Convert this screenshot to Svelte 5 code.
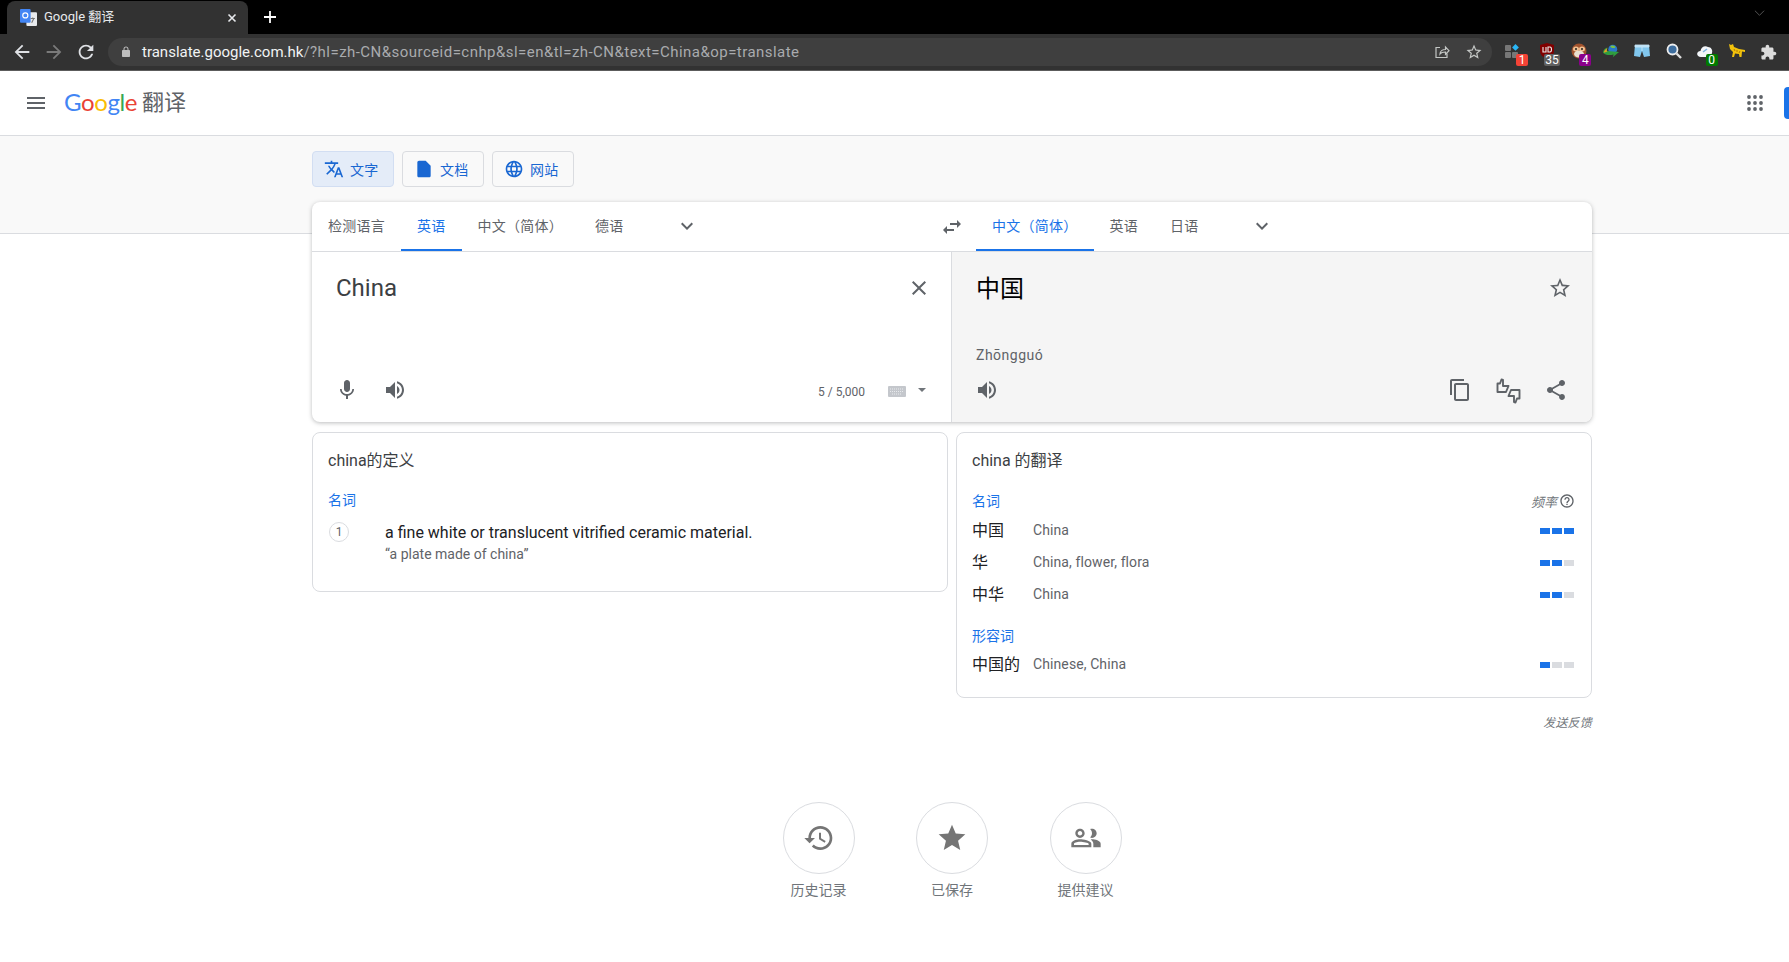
<script>
  const P = {
    menu: 'M3 18h18v-2H3v2zm0-5h18v-2H3v2zm0-7v2h18V6H3z',
    translate: 'M12.87 15.07l-2.54-2.51.03-.03c1.74-1.94 2.98-4.17 3.71-6.53H17V4h-7V2H8v2H1v1.99h11.17C11.5 7.92 10.44 9.75 9 11.35 8.07 10.32 7.3 9.19 6.69 8h-2c.73 1.63 1.73 3.17 2.98 4.56l-5.09 5.02L4 19l5-5 3.11 3.11.76-2.04zM18.5 10h-2L12 22h2l1.12-3h4.75L21 22h2l-4.5-12zm-2.62 7l1.62-4.33L19.12 17h-3.24z',
    doc: 'M14 2H6c-1.1 0-1.99.9-1.99 2L4 20c0 1.1.89 2 1.99 2H18c1.1 0 2-.9 2-2V8l-6-6z',
    globe: 'M11.99 2C6.47 2 2 6.48 2 12s4.47 10 9.99 10C17.52 22 22 17.52 22 12S17.52 2 11.99 2zm6.93 6h-2.95c-.32-1.25-.78-2.45-1.38-3.56 1.84.63 3.37 1.91 4.33 3.56zM12 4.04c.83 1.2 1.48 2.53 1.91 3.96h-3.82c.43-1.43 1.08-2.76 1.91-3.96zM4.26 14C4.1 13.36 4 12.69 4 12s.1-1.36.26-2h3.38c-.08.66-.14 1.32-.14 2 0 .68.06 1.34.14 2H4.26zm.82 2h2.95c.32 1.25.78 2.45 1.38 3.56-1.84-.63-3.37-1.9-4.33-3.56zm2.95-8H5.08c.96-1.66 2.49-2.93 4.33-3.56C8.81 5.55 8.35 6.75 8.03 8zM12 19.96c-.83-1.2-1.48-2.53-1.91-3.96h3.82c-.43 1.43-1.08 2.76-1.91 3.96zM14.34 14H9.66c-.09-.66-.16-1.32-.16-2 0-.68.07-1.35.16-2h4.68c.09.65.16 1.32.16 2 0 .68-.07 1.34-.16 2zm.25 5.56c.6-1.11 1.06-2.31 1.38-3.56h2.95c-.96 1.65-2.49 2.93-4.33 3.56zM16.36 14c.08-.66.14-1.32.14-2 0-.68-.06-1.34-.14-2h3.38c.16.64.26 1.31.26 2s-.1 1.36-.26 2h-3.38z',
    swap: 'M6.99 11L3 15l3.99 4v-3H14v-2H6.99v-3zM21 9l-3.99-4v3H10v2h7.01v3L21 9z',
    more: 'M16.59 8.59L12 13.17 7.41 8.59 6 10l6 6 6-6z',
    close: 'M19 6.41L17.59 5 12 10.59 6.41 5 5 6.41 10.59 12 5 17.59 6.41 19 12 13.41 17.59 19 19 17.59 13.41 12z',
    mic: 'M12 14c1.66 0 2.99-1.34 2.99-3L15 5c0-1.66-1.34-3-3-3S9 3.34 9 5v6c0 1.66 1.34 3 3 3zm5.3-3c0 3-2.54 5.1-5.3 5.1S6.7 14 6.7 11H5c0 3.41 2.72 6.23 6 6.72V21h2v-3.28c3.28-.48 6-3.3 6-6.72h-1.7z',
    vol: 'M3 9v6h4l5 5V4L7 9H3zm13.5 3c0-1.77-1.02-3.29-2.5-4.03v8.05c1.48-.73 2.5-2.25 2.5-4.02zM14 3.23v2.06c2.89.86 5 3.54 5 6.71s-2.11 5.85-5 6.71v2.06c4.01-.91 7-4.49 7-8.77s-2.99-7.86-7-8.77z',
    starO: 'M22 9.24l-7.19-.62L12 2 9.19 8.63 2 9.24l5.46 4.73L5.82 21 12 17.27 18.18 21l-1.63-7.03L22 9.24zM12 15.4l-3.76 2.27 1-4.28-3.32-2.88 4.38-.38L12 6.1l1.71 4.04 4.38.38-3.32 2.88 1 4.28L12 15.4z',
    star: 'M12 17.27L18.18 21l-1.64-7.03L22 9.24l-7.19-.61L12 2 9.19 8.63 2 9.24l5.46 4.73L5.82 21z',
    copy: 'M16 1H4c-1.1 0-2 .9-2 2v14h2V3h12V1zm3 4H8c-1.1 0-2 .9-2 2v14c0 1.1.9 2 2 2h11c1.1 0 2-.9 2-2V7c0-1.1-.9-2-2-2zm0 16H8V7h11v14z',
    share: 'M18 16.08c-.76 0-1.44.3-1.96.77L8.91 12.7c.05-.23.09-.46.09-.7s-.04-.47-.09-.7l7.05-4.11c.54.5 1.25.81 2.04.81 1.66 0 3-1.34 3-3s-1.34-3-3-3-3 1.34-3 3c0 .24.04.47.09.7L8.04 9.81C7.5 9.31 6.79 9 6 9c-1.66 0-3 1.34-3 3s1.34 3 3 3c.79 0 1.5-.31 2.04-.81l7.12 4.16c-.05.21-.08.43-.08.65 0 1.61 1.31 2.92 2.92 2.92 1.61 0 2.92-1.31 2.92-2.92s-1.31-2.92-2.92-2.92z',
    history: 'M13 3c-4.97 0-9 4.03-9 9H1l3.89 3.89.07.14L9 12H6c0-3.87 3.13-7 7-7s7 3.13 7 7-3.13 7-7 7c-1.93 0-3.68-.79-4.94-2.06l-1.42 1.42C8.27 19.99 10.51 21 13 21c4.97 0 9-4.03 9-9s-4.03-9-9-9zm-1 5v5l4.28 2.54.72-1.21-3.5-2.08V8H12z',
    people: 'M16.5 13c-.3 0-.6.02-.95.05C16.7 13.9 17.5 15 17.5 16.25V19H23v-2.75c0-2.17-4.33-3.25-6.5-3.25zM7.5 13C5.33 13 1 14.08 1 16.25V19h15v-2.75C16 14.08 9.67 13 7.500 13zm6.500 4.200H3v-.95c0-.54 2.060-1.450 4.500-1.450s6.500.91 6.500 1.450v.95zM7.500 12C9.430 12 11 10.430 11 8.500S9.430 5 7.500 5 4 6.570 4 8.500 5.570 12 7.500 12zm0-5.200c.94 0 1.700.76 1.700 1.700s-.76 1.700-1.700 1.700-1.700-.76-1.700-1.700.76-1.700 1.700-1.700zm9 5.200c1.930 0 3.500-1.570 3.500-3.500S18.430 5 16.500 5c-.5 0-.98.1-1.400.3.88 1 1.400 2.020 1.400 3.200s-.52 2.200-1.400 3.200c.42.2.9.3 1.400.3z',
    help: 'M11 18h2v-2h-2v2zm1-16C6.48 2 2 6.48 2 12s4.48 10 10 10 10-4.48 10-10S17.52 2 12 2zm0 18c-4.41 0-8-3.59-8-8s3.59-8 8-8 8 3.59 8 8-3.59 8-8 8zm0-14c-2.21 0-4 1.79-4 4h2c0-1.1.9-2 2-2s2 .9 2 2c0 2-3 1.75-3 5h2c0-2.25 3-2.5 3-5 0-2.21-1.79-4-4-4z',
    back: 'M20 11H7.83l5.59-5.59L12 4l-8 8 8 8 1.41-1.41L7.83 13H20v-2z',
    forward: 'M4 11h12.17l-5.59-5.59L12 4l8 8-8 8-1.41-1.41L16.17 13H4v-2z',
    reload: 'M17.65 6.35C16.2 4.9 14.21 4 12 4c-4.42 0-7.99 3.58-7.99 8s3.57 8 7.99 8c3.73 0 6.84-2.55 7.73-6h-2.08c-.82 2.33-3.04 4-5.65 4-3.31 0-6-2.69-6-6s2.69-6 6-6c1.66 0 3.14.69 4.22 1.78L13 11h7V4l-2.35 2.35z',
    lock: 'M18 8h-1V6c0-2.76-2.24-5-5-5S7 3.24 7 6v2H6c-1.1 0-2 .9-2 2v10c0 1.1.9 2 2 2h12c1.1 0 2-.9 2-2V10c0-1.1-.9-2-2-2zM9 6c0-1.66 1.34-3 3-3s3 1.34 3 3v2H9V6z',
    puzzle: 'M20.5 11H19V7c0-1.1-.9-2-2-2h-4V3.5C13 2.12 11.88 1 10.5 1S8 2.12 8 3.5V5H4c-1.1 0-1.99.9-1.99 2v3.8H3.5c1.49 0 2.7 1.21 2.7 2.7s-1.21 2.7-2.7 2.7H2V20c0 1.1.9 2 2 2h3.8v-1.5c0-1.49 1.21-2.7 2.7-2.7 1.49 0 2.7 1.21 2.7 2.7V22H17c1.1 0 2-.9 2-2v-4h1.5c1.38 0 2.5-1.12 2.5-2.5S21.88 11 20.5 11z'
  };
  const sourceTabs = ['检测语言', '英语', '中文（简体）', '德语'];
  const targetTabs = ['中文（简体）', '英语', '日语'];
  const nouns = [
    { w: '中国', t: 'China', f: 3 },
    { w: '华', t: 'China, flower, flora', f: 2 },
    { w: '中华', t: 'China', f: 2 }
  ];
  const adjs = [{ w: '中国的', t: 'Chinese, China', f: 1 }];
  const tiles = [
    { i: P.history, l: '历史记录' },
    { i: P.star, l: '已保存' },
    { i: P.people, l: '提供建议' }
  ];
</script>

{#snippet icon(d, cls = '')}
  <svg class="ic {cls}" viewBox="0 0 24 24" aria-hidden="true"><path {d} /></svg>
{/snippet}

{#snippet row(r)}
  <div class="trow">
    <span class="tword">{r.w}</span>
    <span class="ttrans">{r.t}</span>
    <span class="freq">
      {#each [1, 2, 3] as n}<i class:on={n <= r.f}></i>{/each}
    </span>
  </div>
{/snippet}

<div class="win">
  <div class="strip">
    <div class="tab">
      <svg class="favicon" viewBox="0 0 16 16" aria-hidden="true">
        <rect x="6" y="3" width="10" height="13" rx="1" fill="#e8eaed" />
        <rect x="0" y="0" width="10" height="13" rx="1" fill="#4285f4" />
        <circle cx="5" cy="6" r="2.4" fill="none" stroke="#fff" stroke-width="1.1" />
        <path d="M10 9h4M12 8v1M11 13l2-4" stroke="#777" stroke-width="1" fill="none" />
      </svg>
      <span class="tabtitle">Google 翻译</span>
      <svg class="tabx" viewBox="0 0 10 10" aria-hidden="true"><path d="M1.5 1.5l7 7M8.5 1.5l-7 7" /></svg>
    </div>
    <svg class="plus" viewBox="0 0 14 14" aria-hidden="true"><path d="M7 1v12M1 7h12" /></svg>
    <svg class="stripchev" viewBox="0 0 12 8" aria-hidden="true"><path d="M1 1.5l5 5 5-5" /></svg>
  </div>

  <div class="toolbar">
    {@render icon(P.back, 'nav')}
    {@render icon(P.forward, 'nav dim')}
    {@render icon(P.reload, 'nav')}
    <div class="omni">
      {@render icon(P.lock, 'lock')}
      <span class="url"><b>translate.google.com.hk</b>/?hl=zh-CN&amp;sourceid=cnhp&amp;sl=en&amp;tl=zh-CN&amp;text=China&amp;op=translate</span>
      <svg class="omni-ic share-o" viewBox="0 0 16 16" aria-hidden="true"><path d="M6 3.5H2v10h11v-4M6 10c0-3 2.500-4.500 5.500-4.500V3l3.500 3.700-3.500 3.600V8C9 8 7 8.500 6 10z" /></svg>
      {@render icon(P.starO, 'omni-star')}
    </div>
    <div class="exts">
      <div class="ext">
        <svg viewBox="0 0 16 16" aria-hidden="true"><rect x="-3" y="2" width="6" height="6" rx="1" fill="#777" /><rect x="-3" y="9" width="6" height="6" rx="1" fill="#777" /><rect x="4" y="9" width="6" height="6" rx="1" fill="#777" /><path d="M7.500 1l3.400 3.400-3.400 3.400-3.400-3.400z" fill="#29b6f6" /></svg>
        <span class="badge red">1</span>
      </div>
      <div class="ext">
        <svg viewBox="0 0 16 16" aria-hidden="true"><path d="M1 2l7-2 7 2v6c0 4-3.500 6.500-7 8-3.500-1.500-7-4-7-8z" fill="#800000" /><path d="M4 4v5h3V4M9 9V4h2c2 0 2 5 0 5z" fill="none" stroke="#eee" stroke-width="1.100" /></svg>
        <span class="badge gray">35</span>
      </div>
      <div class="ext">
        <svg viewBox="0 0 16 16" aria-hidden="true"><circle cx="8" cy="8" r="7.500" fill="#a0522d" /><ellipse cx="5" cy="6" rx="3" ry="2.500" fill="#f0c090" /><ellipse cx="11" cy="6" rx="3" ry="2.500" fill="#f0c090" /><ellipse cx="8" cy="11" rx="5" ry="3.500" fill="#e8e0d0" /><circle cx="5" cy="6" r="1" fill="#222" /><circle cx="11" cy="6" r="1" fill="#222" /></svg>
        <span class="badge purple">4</span>
      </div>
      <div class="ext">
        <svg viewBox="0 0 18 16" aria-hidden="true"><circle cx="11" cy="6" r="5" fill="#2a79c9" /><path d="M8 3c2-2 5-1 6 1-2 1-4 1-6-1z" fill="#7cc243" /><path d="M0 10c0-3 2-5 5-6-1 2-1 3 0 4l13 1-7 6 1-3c-5 1-9 1-12-2z" fill="#2f9e3f" /><path d="M1 10c0-3 2-4 4-5.500-1 2-1 3 0 4z" fill="#e0a020" /></svg>
      </div>
      <div class="ext">
        <svg viewBox="0 0 16 16" aria-hidden="true"><path d="M1 2h14l1 11-6 1-2-6-2 6-6-1z" fill="#81c7ee" /><path d="M1 2h14v2H1zM8 4v4" stroke="#cfeafa" stroke-width=".8" fill="#b5def5" /></svg>
      </div>
      <div class="ext">
        <svg viewBox="0 0 16 16" aria-hidden="true"><circle cx="6.500" cy="6.500" r="5" fill="#3e6e9e" stroke="#eee" stroke-width="1.800" /><path d="M10.500 10.500L15 15" stroke="#ddd" stroke-width="2.400" /></svg>
      </div>
      <div class="ext">
        <svg viewBox="0 0 16 16" aria-hidden="true"><path d="M4 14c-5 0-5-6-.500-6C4 4 8 2 11 4c3 0 5 3 4 6-.500 3-3 4-5 4z" fill="#f2f5f8" /><path d="M6 9l4-3" stroke="#7db1e0" stroke-width="1.500" /></svg>
        <span class="badge green">0</span>
      </div>
      <div class="ext">
        <svg viewBox="0 0 16 16" aria-hidden="true"><path d="M0 1l2 1 2-1 1 3 5 2 6 1v2l-3-.5-.5 5.500h-2l-.5-3-4-.5-1 3.500H3l1-5-3-3z" fill="#f2c20c" /><path d="M5 6l1 2M8 7l0 2M11 8l-1 2" stroke="#a06a00" stroke-width=".8" /></svg>
      </div>
      <div class="ext">{@render icon(P.puzzle, 'puzzle')}</div>
    </div>
  </div>

  <div class="page">
    <header class="head">
      {@render icon(P.menu, 'gray')}
      <div class="logo">
        <span class="gl"><span class="b">G</span><span class="r">o</span><span class="y">o</span><span class="b">g</span><span class="g">l</span><span class="r">e</span></span>
        <span class="prod">翻译</span>
      </div>
      <svg class="apps" viewBox="0 0 16 16" aria-hidden="true">
        {#each [2, 8, 14] as y}{#each [2, 8, 14] as x}<circle cx={x} cy={y} r="1.900" />{/each}{/each}
      </svg>
      <div class="signin"></div>
    </header>

    <div class="band">
      <div class="wrap modes">
        <div class="mode active">{@render icon(P.translate)}<span>文字</span></div>
        <div class="mode">{@render icon(P.doc)}<span>文档</span></div>
        <div class="mode">{@render icon(P.globe)}<span>网站</span></div>
      </div>
    </div>

    <div class="wrap">
      <section class="card">
        <div class="langs">
          <div class="langside">
            {#each sourceTabs as t, i}<div class="lt" class:sel={i === 1}>{t}</div>{/each}
            <div class="chev first">{@render icon(P.more, 'gray')}</div>
          </div>
          <div class="swap">{@render icon(P.swap, 'gray')}</div>
          <div class="langside">
            {#each targetTabs as t, i}<div class="lt" class:sel={i === 0}>{t}</div>{/each}
            <div class="chev second">{@render icon(P.more, 'gray')}</div>
          </div>
        </div>
        <div class="panes">
          <div class="pane left">
            <div class="top">
              <div class="big">China</div>
              <div class="btn">{@render icon(P.close, 'gray')}</div>
            </div>
            <div class="bottom lb">
              <div class="btn">{@render icon(P.mic, 'gray')}</div>
              <div class="btn">{@render icon(P.vol, 'gray')}</div>
              <div class="counter">5 / 5,000</div>
              <svg class="kbd" viewBox="0 0 18 12" aria-hidden="true">
                <rect width="18" height="11" rx="1" fill="#c4c7cc" />
                <path d="M2 3h14M2 5.500h14M4 8h10" stroke="#e8eaed" stroke-width="1" stroke-dasharray="1 1" />
              </svg>
              <span class="caret"></span>
            </div>
          </div>
          <div class="pane right">
            <div class="top">
              <div class="big zh">中国</div>
              <div class="btn">{@render icon(P.starO, 'gray')}</div>
            </div>
            <div class="pinyin">Zhōngguó</div>
            <div class="bottom rb">
              <div class="btn">{@render icon(P.vol, 'gray')}</div>
              <div class="spacer"></div>
              <div class="btn">{@render icon(P.copy, 'gray')}</div>
              <div class="btn">
                <svg class="ic thumbs" viewBox="0 0 24 24" aria-hidden="true"><path d="M1.500 5.500V14H10l2.500-6H7V2l-1.500-.5L4 5.500zM23.500 20.500V12H15l-2.500 6H18v6l1.500.5 1.500-4z" /></svg>
              </div>
              <div class="btn">{@render icon(P.share, 'gray')}</div>
            </div>
          </div>
        </div>
      </section>

      <div class="results">
        <section class="box defbox">
          <h3>china的定义</h3>
          <div class="pos">名词</div>
          <div class="defrow">
            <span class="num">1</span>
            <div>
              <div class="deftext">a fine white or translucent vitrified ceramic material.</div>
              <div class="example">“a plate made of china”</div>
            </div>
          </div>
        </section>
        <section class="box trbox">
          <h3>china 的翻译</h3>
          <div class="poshead">
            <div class="pos">名词</div>
            <div class="freqlabel"><em>频率</em>{@render icon(P.help, 'helpic')}</div>
          </div>
          <div class="rows">{#each nouns as r}{@render row(r)}{/each}</div>
          <div class="pos adj">形容词</div>
          <div class="rows tight">{#each adjs as r}{@render row(r)}{/each}</div>
        </section>
      </div>

      <div class="feedback">发送反馈</div>

      <div class="tiles">
        {#each tiles as t}
          <div class="tile">
            <div class="circle">{@render icon(t.i, 'tileic')}</div>
            <div class="tlabel">{t.l}</div>
          </div>
        {/each}
      </div>
    </div>
  </div>
</div>

<style>
  :global(body) { margin: 0; overflow: hidden; background: #fff; }
  .win { width: 1789px; height: 962px; overflow: hidden; font-family: Roboto, "Noto Sans CJK SC", sans-serif; color: #3c4043; }
  .ic { display: block; width: 24px; height: 24px; fill: #5f6368; flex: none; }

  .strip { height: 34px; background: #000; display: flex; align-items: flex-end; padding-left: 7px; }
  .tab { width: 241px; height: 33px; box-sizing: border-box; background: #323232; border-radius: 8px 8px 0 0; display: flex; align-items: center; padding: 0 11px 0 13px; }
  .favicon { width: 17px; height: 17px; flex: none; }
  .tabtitle { color: #e8eaed; font-size: 13px; line-height: 16px; margin: -2px 0 0 7px; flex: 1; }
  .tabx { width: 10px; height: 10px; fill: none; stroke: #e8eaed; stroke-width: 1.6; }
  .plus { width: 14px; height: 14px; margin: 0 0 10px 15px; fill: none; stroke: #fff; stroke-width: 1.8; }
  .stripchev { width: 11px; height: 8px; margin: 0 24px 17px auto; fill: none; stroke: #5a5a5a; stroke-width: 1; }

  .toolbar { box-sizing: border-box; background: #323232; border-bottom: 1px solid #5c5c5c; display: flex; align-items: center; padding-left: 11px; height: 37px; }
  .ic.nav { width: 22px; height: 22px; fill: #dfe1e5; margin-right: 10px; }
  .ic.nav.dim { fill: #7a7a7a; }
  .omni { margin-left: 1px; width: 1384px; height: 28px; border-radius: 14px; background: #3f3f3f; display: flex; align-items: center; padding: 0 10px 0 12px; box-sizing: border-box; }
  .ic.lock { width: 12px; height: 12px; fill: #bdbdbd; margin-right: 10px; }
  .url { flex: 1; font-size: 15px; color: #a9abae; white-space: nowrap; letter-spacing: .46px; }
  .url b { font-weight: 400; color: #f1f3f4; letter-spacing: 0; }
  .omni-ic { width: 16px; height: 16px; fill: none; stroke: #c4c7c5; stroke-width: 1.200; margin-right: 15px; }
  .ic.omni-star { width: 18px; height: 18px; fill: #c4c7c5; margin-right: -1px; }
  .exts { display: flex; margin-left: 8px; }
  .ext { width: 31.600px; height: 28px; display: flex; align-items: center; justify-content: center; position: relative; }
  .ext svg { width: 16px; height: 16px; display: block; margin-top: -3px; overflow: visible; }
  .ic.puzzle { width: 17px; height: 17px; fill: #dcdcdc; margin-top: 0; }
  .badge { position: absolute; right: 3.500px; bottom: 0; height: 12px; min-width: 12px; padding: 0 1px; box-sizing: border-box; border-radius: 2px; color: #fff; font-size: 12px; line-height: 12px; text-align: center; }
  .red { background: #f44336; }
  .gray { background: #616161; }
  .purple { background: #8b008b; }
  .green { background: #007a00; }
  .ic.gray { background: none; }

  .page { width: 1904px; }
  .head { height: 65px; box-sizing: border-box; border-bottom: 1px solid #dadce0; display: flex; align-items: center; padding: 0 0 0 24px; }
  .logo { display: flex; align-items: center; margin-left: 16px; }
  .gl { font-family: Lato, Roboto, sans-serif; font-size: 24px; letter-spacing: -.4px; margin-top: -3px; }
  .b { color: #4285f4; } .r { color: #ea4335; } .y { color: #fbbc05; } .g { color: #34a853; }
  .prod { font-size: 22px; line-height: 28px; color: #5f6368; margin: -1px 0 0 5px; }
  .apps { width: 16px; height: 16px; margin-left: auto; fill: #5f6368; }
  .signin { width: 88px; height: 32px; margin: 0 32px 0 21px; background: #1a73e8; border-radius: 4px; }

  .band { height: 98px; box-sizing: border-box; background: #f9f9f9; border-bottom: 1px solid #dadce0; padding-top: 15px; }
  .wrap { width: 1280px; margin: 0 auto; }
  .modes { display: flex; gap: 8px; }
  .mode { width: 82px; height: 36px; box-sizing: border-box; border: 1px solid #dadce0; border-radius: 4px; display: flex; align-items: center; padding-left: 11px; gap: 6px; font-size: 14px; letter-spacing: .25px; color: #1967d2; background: #f9f9f9; }
  .mode .ic { fill: #1967d2; width: 20px; height: 20px; }
  .mode.active { background: #e4ecf8; border-color: #d2def2; }

  .card { position: relative; margin-top: -32px; height: 220px; border-radius: 8px; background: #fff; box-shadow: 0 1px 4px 0 rgba(60, 64, 67, .35); overflow: hidden; }
  .langs { height: 50px; box-sizing: border-box; border-bottom: 1px solid #dadce0; display: flex; }
  .langside { width: 616px; display: flex; }
  .lt { height: 49px; box-sizing: border-box; padding: 0 16px; line-height: 48px; font-size: 14px; letter-spacing: .25px; color: #5f6368; white-space: nowrap; }
  .lt.sel { color: #1a73e8; border-bottom: 2px solid #1a73e8; }
  .chev { width: 48px; height: 48px; display: flex; align-items: center; justify-content: center; }
  .chev.first { margin-left: 23px; }
  .chev.second { margin-left: 23px; }
  .swap { width: 48px; height: 49px; display: flex; align-items: center; justify-content: center; }

  .panes { display: flex; height: 170px; }
  .pane { width: 640px; box-sizing: border-box; display: flex; flex-direction: column; padding-top: 12px; }
  .pane.left { border-right: 1px solid #dadce0; }
  .pane.right { background: #f5f5f5; }
  .top { display: flex; align-items: center; justify-content: space-between; height: 48px; padding: 0 8px 0 24px; }
  .big { font-size: 24px; color: #3c4043; }
  .big.zh { color: #000; margin-top: -4px; }
  .btn { width: 48px; height: 48px; display: flex; align-items: center; justify-content: center; flex: none; }
  .bottom { margin-top: auto; margin-bottom: 8px; display: flex; align-items: center; height: 48px; }
  .lb { padding: 0 25px 0 11px; }
  .rb { padding: 0 12px 0 11px; margin-top: 0; }
  .spacer { flex: 1; }
  .counter { margin-left: auto; font-size: 12px; color: #5f6368; margin-top: 3px; }
  .kbd { width: 18px; height: 12px; margin: 4px 0 0 23px; display: block; }
  .caret { margin: 0 0 0 12px; border: 4px solid transparent; border-top-color: #70757a; border-bottom-width: 0; width: 0; height: 0; }
  .pinyin { margin-top: auto; padding-left: 24px; line-height: 20px; font-size: 14px; letter-spacing: .5px; color: #5f6368; margin-bottom: 1px; }
  .thumbs { fill: none; stroke: #5f6368; stroke-width: 1.900; stroke-linejoin: round; overflow: visible; }

  .results { display: grid; grid-template-columns: 636px 636px; gap: 8px; margin-top: 10px; align-items: start; }
  .box { border: 1px solid #dadce0; border-radius: 8px; padding: 16px 15px 0; box-sizing: border-box; }
  .defbox { height: 160px; }
  .trbox { height: 266px; }
  h3 { margin: 0; font-size: 16px; font-weight: 400; line-height: 24px; color: #3c4043; }
  .pos { font-size: 14px; line-height: 20px; color: #1a73e8; }
  .defbox .pos { margin-top: 17px; }
  .defrow { display: flex; margin-top: 11px; }
  .num { width: 20px; height: 20px; box-sizing: border-box; margin-top: 1px; border: 1px solid #dadce0; border-radius: 50%; font-size: 12px; line-height: 18px; text-align: center; color: #5f6368; margin-right: 36px; margin-left: 1px; flex: none; }
  .deftext { font-size: 16px; line-height: 24px; color: #202124; }
  .example { font-size: 14px; line-height: 18px; color: #5f6368; }
  .poshead { display: flex; justify-content: space-between; margin-top: 18px; }
  .freqlabel { display: flex; align-items: center; gap: 2px; font-size: 13px; color: #70757a; margin-right: 1px; }
  .freqlabel em { font-style: italic; }
  .ic.helpic { width: 16px; height: 16px; }
  .rows { margin-top: 3px; }
  .rows.tight { margin-top: 2px; }
  .adj { margin-top: 16px; }
  .trow { display: flex; align-items: center; height: 32px; }
  .tword { width: 61px; font-size: 16px; line-height: 20px; margin-top: 2px; color: #202124; flex: none; }
  .ttrans { font-size: 14px; letter-spacing: .1px; color: #5f6368; flex: 1; }
  .freq { display: flex; gap: 2px; margin: 2px 2px 0 0; }
  .freq i { width: 10px; height: 6px; background: #dadce0; display: block; }
  .freq i.on { background: #1a73e8; }

  .feedback { margin-top: 17px; text-align: right; font-size: 12px; line-height: 16px; letter-spacing: .2px; font-style: italic; color: #70757a; }
  .tiles { display: flex; justify-content: center; margin-top: 71px; }
  .tile { width: 133.500px; display: flex; flex-direction: column; align-items: center; }
  .circle { width: 72px; height: 72px; box-sizing: border-box; border: 1px solid #dadce0; border-radius: 50%; display: flex; align-items: center; justify-content: center; }
  .ic.tileic { width: 32px; height: 32px; fill: #757575; }
  .tlabel { margin-top: 6px; font-size: 14px; line-height: 20px; color: #70757a; }
</style>
